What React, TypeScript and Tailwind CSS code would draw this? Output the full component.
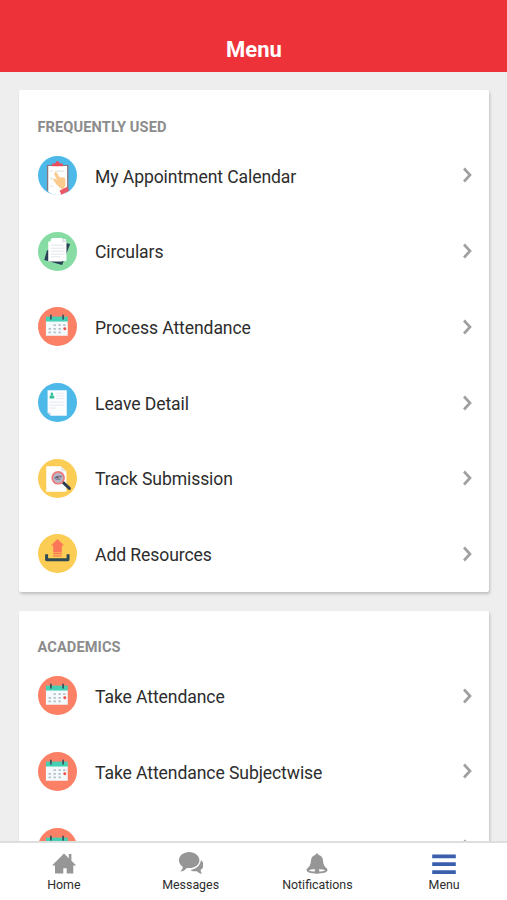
import type { ReactNode } from "react";

type IconName =
  | "appointment"
  | "circulars"
  | "calendar"
  | "leave"
  | "track"
  | "upload";

type Section = {
  title: string;
  items: { label: string; icon: IconName }[];
};

const sections: Section[] = [
  {
    title: "FREQUENTLY USED",
    items: [
      { label: "My Appointment Calendar", icon: "appointment" },
      { label: "Circulars", icon: "circulars" },
      { label: "Process Attendance", icon: "calendar" },
      { label: "Leave Detail", icon: "leave" },
      { label: "Track Submission", icon: "track" },
      { label: "Add Resources", icon: "upload" },
    ],
  },
  {
    title: "ACADEMICS",
    items: [
      { label: "Take Attendance", icon: "calendar" },
      { label: "Take Attendance Subjectwise", icon: "calendar" },
      { label: "", icon: "calendar" },
    ],
  },
];

const circleColors: Record<IconName, string> = {
  appointment: "#4cb9e9",
  circulars: "#86dca3",
  calendar: "#fb8066",
  leave: "#4cb9e9",
  track: "#fccd55",
  upload: "#fccd55",
};

const drawings: Record<IconName, ReactNode> = {
  appointment: (
    <>
      <path d="M50 56h65v77q-15 12-33 12t-32-12z" fill="#8b7478" />
      <path d="M54 59h57v78q-13 10-29 10t-28-10z" fill="#fff" />
      <path d="M66 60v-8h9q2-8 7-8t7 8h9v8z" fill="#ee4b5b" />
      <path
        d="M60 75h8M74 75h28M60 97h8M60 120h8"
        stroke="#dfe5df"
        strokeWidth="4"
      />
      <path
        d="M74 79q4-2 7 2l7 12 14 1q4 1 4 7v18l-9 13-18-17-10-14q0-5 5-3l7 4-9-18q-1-4 2-5z"
        fill="#fbcb8e"
      />
      <path d="M88 134l23-12 6 12-23 12z" fill="#ec5667" />
    </>
  ),
  circulars: (
    <>
      <path d="M50 85l-8 29 54 15 24-64-14-3z" fill="#283f55" />
      <path d="M61 50h47v67H61z" fill="#edf2f5" />
      <path d="M65 47h31l13 13v56H96v2H54V58h8z" fill="#fff" />
      <path d="M96 47v13h13z" fill="#dce5ea" />
      <path
        d="M62 69h39M62 78h42M62 87h42M62 96h42M62 104h28"
        stroke="#dce1e5"
        strokeWidth="2.5"
      />
    </>
  ),
  calendar: (
    <>
      <path d="M47 71h66v45H47z" fill="#f4fafb" />
      <path d="M47 58h66v15H47z" fill="#45d0b3" />
      <path
        d="M62 54v11M99 54v11"
        stroke="#394e5c"
        strokeWidth="5"
        strokeLinecap="round"
      />
      <path
        d="M70 84h7M85 84h7M99 84h7M55 95h7M70 95h7M85 95h7M55 106h7M70 106h7M85 106h7"
        stroke="#b4bdc8"
        strokeWidth="5"
      />
      <circle cx="104" cy="95" r="4.5" fill="#ee5149" />
    </>
  ),
  leave: (
    <>
      <path d="M52 51h58v77H61l-9-10z" fill="#fbfdff" />
      <path d="M52 118h9v10z" fill="#c5d9e4" />
      <circle cx="65" cy="62" r="4" fill="#33bd99" />
      <path d="M58 76v-6q0-4 7-4t7 4v6z" fill="#33bd99" />
      <path
        d="M77 60h26M77 68h26M77 76h26M58 87h45M58 96h45M58 105h20"
        stroke="#e2e6e9"
        strokeWidth="2.5"
      />
    </>
  ),
  track: (
    <>
      <path d="M48 51h44l17 16v61H48z" fill="#fff" />
      <path d="M92 51v16h17z" fill="#e5e9ec" />
      <path
        d="M98 99l20 19"
        stroke="#2e3e4f"
        strokeWidth="9"
        strokeLinecap="round"
      />
      <circle
        cx="84"
        cy="86"
        r="18"
        fill="#b9b5c5"
        stroke="#ef7778"
        strokeWidth="5"
      />
      <path d="M73 87l8-5h14M76 90h15" stroke="#77758d" strokeWidth="4" />
    </>
  ),
  upload: (
    <>
      <path
        d="M49 90v17h65V90"
        fill="none"
        stroke="#2e4b55"
        strokeWidth="9"
        strokeLinejoin="round"
      />
      <path d="M82 44l20 20H95v20H69V64H62z" fill="#fb7759" />
      <path d="M69 88h26M69 95h26" stroke="#fb7759" strokeWidth="4" />
    </>
  ),
};

function MenuIcon({ name }: { name: IconName }) {
  return (
    <svg
      viewBox="23 29 118 118"
      className="h-[39px] w-[39px] shrink-0"
      aria-hidden="true"
    >
      <circle cx="82" cy="88" r="59" fill={circleColors[name]} />
      {drawings[name]}
    </svg>
  );
}

function Chevron() {
  return (
    <svg viewBox="0 0 11 18" className="h-[18px] w-[11px] shrink-0">
      <path
        d="M2 2.5l6 6.5-6 6.5"
        fill="none"
        stroke="#a0a0a0"
        strokeWidth="2.7"
      />
    </svg>
  );
}

const tabs: { label: string; icon: ReactNode }[] = [
  {
    label: "Home",
    icon: (
      <path
        d="M12 1.5l4.8 4.7V2h2.6v6.8l4.7 4.6h-2.8v8.2h-6.6v-5.4h-3.4v5.4H3v-8.2H0z"
        fill="#969696"
      />
    ),
  },
  {
    label: "Messages",
    icon: (
      <>
        <path
          d="M10.2 0C4.5 0 0 3.6 0 8.2c0 2.8 1.4 5 3.8 6.5-.2 2-1.2 3.5-2.5 4.7 2.9-.2 5-1.5 6.5-3.5l2.4.2c5.7 0 10.2-3.4 10.2-7.9S15.9 0 10.2 0z"
          fill="#969696"
        />
        <path
          d="M21.8 8.2c-.2 5.2-4.5 8.8-10.3 9.7 1.6 1.3 3.8 1.5 6.3 1.4 1.500 1.600 3.200 2.300 5.600 2.500-1.200-1.100-1.800-2.300-1.800-3.800 1.900-1.200 3-2.800 3-5 0-1.800-1-3.600-2.800-4.800z"
          fill="#969696"
        />
      </>
    ),
  },
  {
    label: "Notifications",
    icon: (
      <>
        <path
          d="M12 1.2q1.2 0 1.4 1.600c3.100.9 4.600 3.300 4.700 6.200.2 4 1.500 5.500 3.500 7.200.8.600.9 1.200.9 1.900 0 2.300-4.700 3.600-10.500 3.600S1.500 20.400 1.500 18.100c0-.7.2-1.300.9-1.900 2-1.700 3.300-3.200 3.500-7.200.1-2.900 1.600-5.300 4.700-6.200Q10.800 1.200 12 1.200z"
          fill="#969696"
        />
        <ellipse cx="12" cy="18.300" rx="8" ry="1.300" fill="#fff" />
        <circle cx="12" cy="19" r="2.400" fill="#969696" />
      </>
    ),
  },
  {
    label: "Menu",
    icon: (
      <path
        d="M.2 2.500h23.600v3.700H.2zM.2 10.300h23.600V14H.2zM.2 18.200h23.600v3.700H.2z"
        fill="#3b5fad"
      />
    ),
  },
];

export default function App() {
  return (
    <div className="flex h-[900px] w-full flex-col overflow-hidden bg-[#eeeeee] font-['Roboto',sans-serif] text-[#2d2d2d]">
      <header className="flex h-[71.5px] shrink-0 items-end justify-center bg-[#ee3239] pb-[6.5px]">
        <h1 className="pl-px text-[22px] leading-[30px] font-bold text-white">
          Menu
        </h1>
      </header>

      <main className="flex min-h-0 flex-1 flex-col gap-[18.8px] overflow-hidden px-[19px] pt-[18.8px]">
        {sections.map((section) => (
          <section
            key={section.title}
            className="mr-[-0.5px] shrink-0 rounded-[2px] bg-white pr-[16px] pl-[18.5px] shadow-[1px_2px_3px_rgba(0,0,0,0.2)]"
          >
            <h2 className="h-[47.3px] pt-[26.5px] text-[14.6px] leading-5 font-bold tracking-[0.1px] text-[#8c8c8c]">
              {section.title}
            </h2>
            <ul>
              {section.items.map((item, i) => (
                <li key={i} className="flex h-[75.7px] items-center">
                  <MenuIcon name={item.icon} />
                  <span className="flex-1 pt-[2.6px] pl-[18.5px] text-[17.6px] leading-6 tracking-[-0.1px]">
                    {item.label}
                  </span>
                  <Chevron />
                </li>
              ))}
            </ul>
          </section>
        ))}
      </main>

      <nav className="grid h-[59px] shrink-0 grid-cols-4 border-t-2 border-[#dedede] bg-white">
        {tabs.map((tab) => (
          <button
            key={tab.label}
            className="flex flex-col items-center pt-[9px] pl-px"
          >
            <svg viewBox="0 0 24 24" className="h-6 w-6">
              {tab.icon}
            </svg>
            <span className="text-[12.4px] leading-[18px]">{tab.label}</span>
          </button>
        ))}
      </nav>
    </div>
  );
}
